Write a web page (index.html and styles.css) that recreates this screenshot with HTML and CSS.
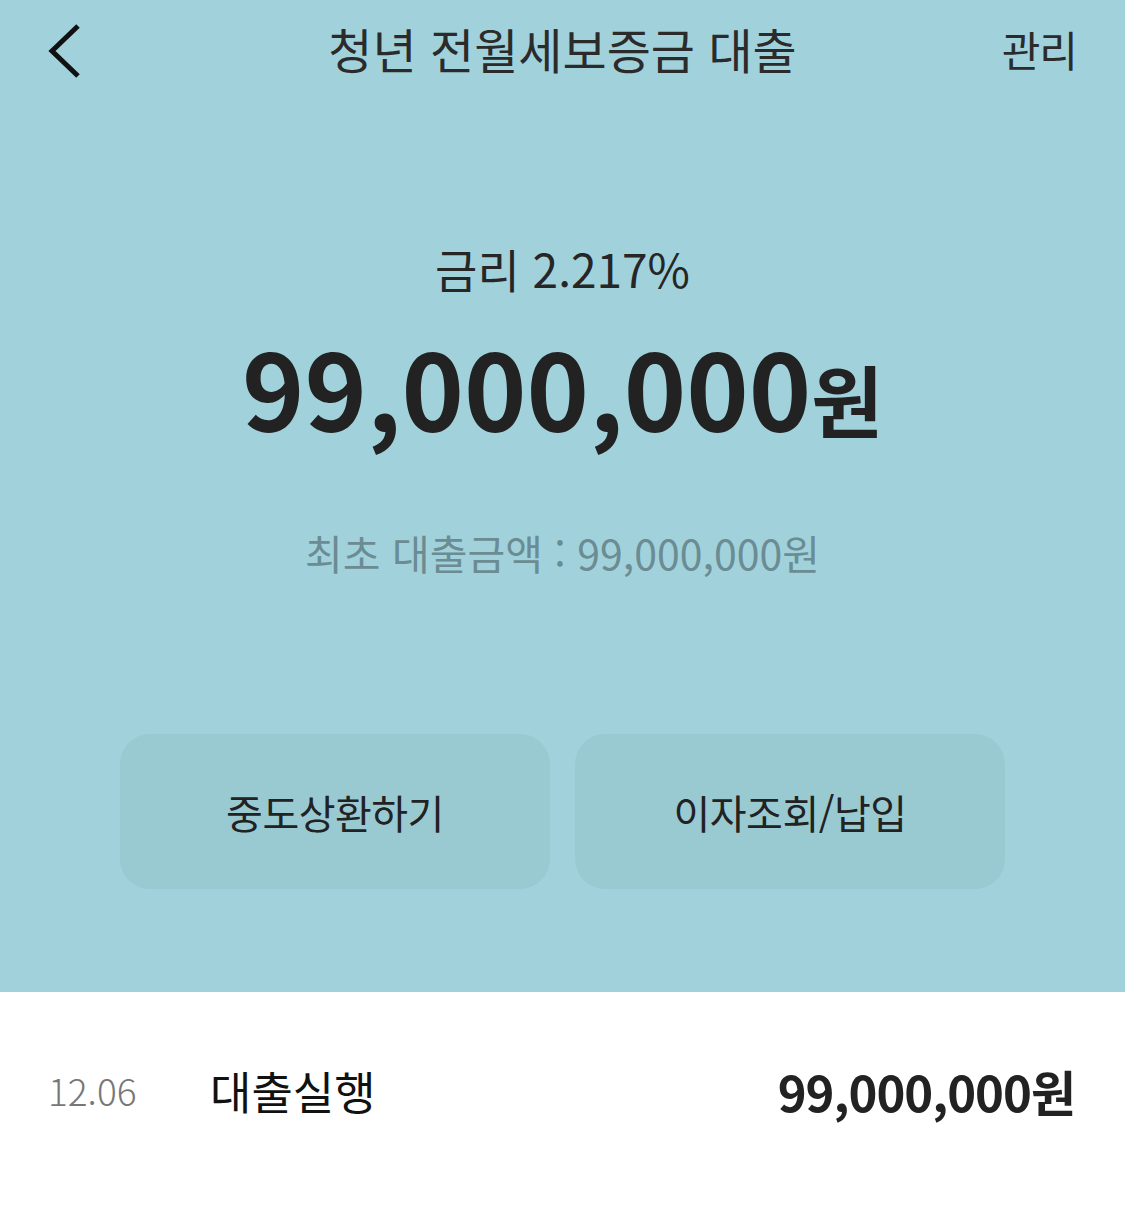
FILE: index.html
```html
<!DOCTYPE html>
<html lang="ko">
    <head>
        <meta charset="UTF-8">
        <meta name="viewport" content="width=device-width, initial-scale=1.0">
        <title>청년 전월세보증금 대출</title>
        <link rel="stylesheet" href="styles.css">
    </head>
    <body>
        <div class="loan-top">
            <div class="topbar">
                <button class="back-btn" type="button" aria-label="뒤로">
                    <svg width="36" height="56" viewBox="0 0 36 56">
                        <path d="M32 3 L6 28 L32 53" fill="none" stroke="#111" stroke-width="5"/>
                    </svg>
                </button>
                <h1 class="topbar-title">청년 전월세보증금 대출</h1>
                <span class="topbar-manage">관리</span>
            </div>

            <div class="loan-summary">
                <p class="rate">금리 2.217%</p>
                <p class="balance">99,000,000<span class="won">원</span></p>
                <p class="first-amount">최초 대출금액 : 99,000,000원</p>
            </div>

            <div class="action-row">
                <button class="action-btn" type="button">중도상환하기</button>
                <button class="action-btn" type="button">이자조회/납입</button>
            </div>
        </div>

        <ul class="history">
            <li class="history-item">
                <span class="history-date">12.06</span>
                <span class="history-name">대출실행</span>
                <span class="history-amount">99,000,000원</span>
            </li>
        </ul>
    </body>
</html>
```

FILE: styles.css
```css
*{
    margin: 0px;
    padding: 0px;
    box-sizing: border-box;
}
body{
    background-color: #ffffff;
    font-family: "Noto Sans CJK KR", "Noto Sans", sans-serif;
    color: #222222;
}
.loan-top{
    background-color: #a1d2dc;
    height: 992px;
    display: flex;
    flex-direction: column;
}
.topbar{
    height: 96px;
    display: flex;
    align-items: center;
    padding: 0 48px 0 46px;
}
.back-btn{
    background: none;
    border: none;
    width: 92px;
    height: 56px;
    margin-top: 5px;
    display: flex;
    align-items: center;
}
.topbar-title{
    flex: 1;
    text-align: center;
    font-size: 48px;
    font-weight: 400;
    color: #2b2b2b;
}
.topbar-manage{
    width: 90px;
    text-align: right;
    font-size: 42px;
    color: #2b2b2b;
    letter-spacing: -1px;
}
.loan-summary{
    display: flex;
    flex-direction: column;
    align-items: center;
    padding-top: 132px;
}
.rate{
    font-size: 46px;
    line-height: 80px;
    color: #262626;
}
.balance{
    margin-top: 8px;
    font-size: 106px;
    font-weight: 700;
    line-height: 140px;
    color: #222222;
}
.balance .won{
    font-size: 78px;
}
.first-amount{
    margin-top: 54px;
    font-size: 41px;
    line-height: 60px;
    color: #6b8c92;
}
.action-row{
    display: flex;
    gap: 25px;
    padding: 0 120px;
    margin-top: 152px;
}
.action-btn{
    flex: 1;
    height: 155px;
    border: none;
    border-radius: 30px;
    background-color: #99cad2;
    font-family: inherit;
    font-size: 40px;
    color: #222222;
    letter-spacing: -0.5px;
}
.history{
    list-style: none;
}
.history-item{
    display: flex;
    align-items: center;
    height: 196px;
    padding: 0 50px 0 48px;
}
.history-date{
    width: 162px;
    font-size: 37px;
    font-weight: 300;
    color: #777777;
}
.history-name{
    flex: 1;
    font-size: 45px;
    color: #111111;
}
.history-amount{
    font-size: 49px;
    font-weight: 700;
    color: #222222;
    letter-spacing: -1px;
}
```
